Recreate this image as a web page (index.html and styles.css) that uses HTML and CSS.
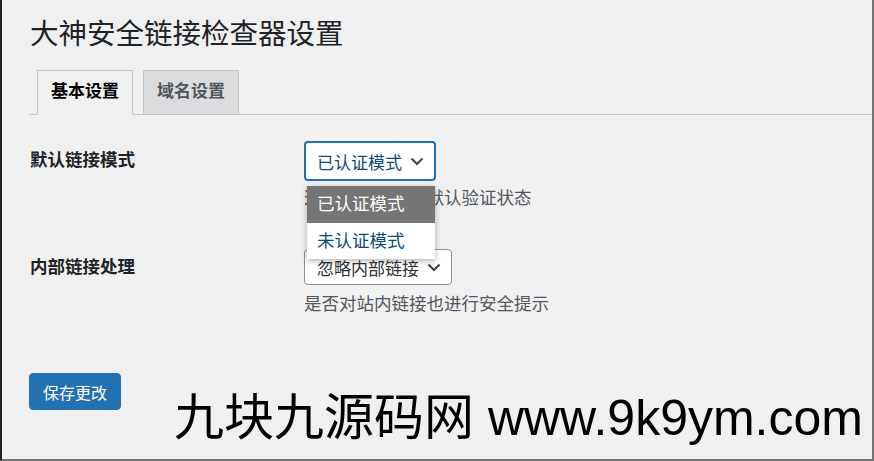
FILE: index.html
```html
<!DOCTYPE html>
<html lang="zh-CN">
<head>
    <meta charset="UTF-8">
    <meta name="viewport" content="width=device-width, initial-scale=1.0">
    <title>大神安全链接检查器设置</title>
    <link rel="stylesheet" href="styles.css">
</head>
<body>
    <div class="wrap">
        <h1 class="page-title">大神安全链接检查器设置</h1>

        <nav class="nav-tabs">
            <a class="nav-tab active">基本设置</a>
            <a class="nav-tab">域名设置</a>
        </nav>

        <div class="form-row first">
            <div class="row-label tall">默认链接模式</div>
            <div class="row-field">
                <div class="select-wrap">
                    <div class="select focused">
                        <span>已认证模式</span>
                        <svg class="chevron" viewBox="0 0 14 9" width="14" height="9"><path d="M1.5 1.5 L7 7 L12.5 1.5" fill="none" stroke="currentColor" stroke-width="2"/></svg>
                    </div>
                    <!-- 열린 드롭다운 -->
                    <ul class="dropdown">
                        <li class="option selected">已认证模式</li>
                        <li class="option">未认证模式</li>
                    </ul>
                </div>
                <p class="description">选择外部链接的默认验证状态</p>
            </div>
        </div>

        <div class="form-row second">
            <div class="row-label">内部链接处理</div>
            <div class="row-field">
                <div class="select">
                    <span>忽略内部链接</span>
                    <svg class="chevron" viewBox="0 0 14 9" width="14" height="9"><path d="M1.5 1.5 L7 7 L12.5 1.5" fill="none" stroke="currentColor" stroke-width="2"/></svg>
                </div>
                <p class="description">是否对站内链接也进行安全提示</p>
            </div>
        </div>

        <button class="button-primary">保存更改</button>
    </div>

    <div class="watermark">九块九源码网 www.9k9ym.com</div>
</body>
</html>
```

FILE: styles.css
```css
* {
    margin: 0;
    padding: 0;
    box-sizing: border-box;
}

html, body {
    height: 100%;
}

body {
    position: relative;
    background: #f0f0f1;
    color: #1d2327;
    font-family: 'Liberation Sans', 'Noto Sans CJK SC', sans-serif;
    border-left: 2px solid #1d2327;
    border-right: 2px solid #737373;
    border-bottom: 2px solid #737373;
    overflow: hidden;
}

.wrap {
    padding-left: 27px;
}

.page-title {
    font-size: 28.5px;
    font-weight: 400;
    line-height: 40px;
    margin-top: 14px;
    padding-left: 1px;
    color: #1d2327;
}

.nav-tabs {
    display: flex;
    gap: 10px;
    padding-left: 8px;
    margin-top: 16px;
    border-bottom: 1px solid #c3c4c7;
}

.nav-tab {
    display: block;
    height: 45px;
    margin-bottom: -1px;
    padding: 0 13px;
    border: 1px solid #c3c4c7;
    background: #dcdcde;
    color: #50575e;
    font-size: 17px;
    font-weight: 700;
    line-height: 42px;
}

.nav-tab.active {
    background: #f0f0f1;
    border-bottom-color: #f0f0f1;
    color: #000;
}

.form-row {
    display: grid;
    grid-template-columns: 275px 1fr;
}

.form-row.first {
    margin-top: 26px;
}

.form-row.second {
    margin-top: 39px;
}

.row-label {
    font-size: 17.5px;
    font-weight: 700;
    line-height: 36px;
    padding-left: 1px;
    color: #1d2327;
}

.row-label.tall {
    line-height: 38px;
}

.select-wrap {
    position: relative;
    width: max-content;
}

.select {
    display: flex;
    align-items: center;
    gap: 8px;
    width: max-content;
    height: 36px;
    padding: 0 10px 0 12px;
    background: #fff;
    border: 1px solid #8c8f94;
    border-radius: 4px;
    color: #2c3338;
    font-size: 17px;
}

.select.focused {
    height: 40px;
    padding: 0 10px 0 11px;
    border: 2px solid #2271b1;
    color: #0a4b78;
}

.chevron {
    color: #3c434a;
    margin-top: 1px;
}

.dropdown {
    position: absolute;
    top: 45px;
    left: 3px;
    width: 128px;
    list-style: none;
    background: #fff;
    box-shadow: 0 2px 6px rgba(0, 0, 0, 0.3);
    z-index: 2;
}

.option {
    height: 36.5px;
    padding-left: 10px;
    font-size: 17.5px;
    line-height: 36px;
    color: #0a4b78;
}

.option.selected {
    background: #757575;
    color: #fff;
}

.description {
    margin-top: 5px;
    font-size: 17.5px;
    line-height: 24px;
    color: #50575e;
}

.second .description {
    margin-top: 7px;
}

.button-primary {
    display: block;
    margin-top: 57px;
    margin-left: 0;
    width: 92px;
    height: 37px;
    background: #2271b1;
    border: 1px solid #2271b1;
    border-radius: 4px;
    color: #fff;
    font-family: 'Liberation Sans', 'Noto Sans CJK SC', sans-serif;
    font-size: 16px;
}

.watermark {
    position: absolute;
    left: 172px;
    top: 393px;
    font-size: 50px;
    line-height: 50px;
    color: #000;
    white-space: nowrap;
}
```
